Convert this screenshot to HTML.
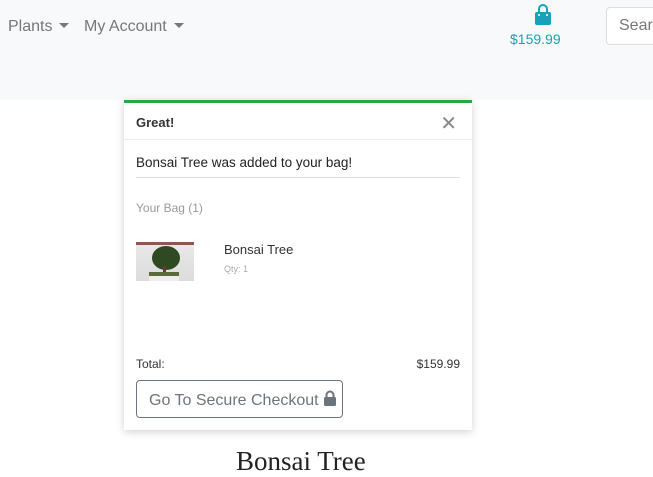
<!DOCTYPE html>
<html><head><meta charset="utf-8"><style>
*{box-sizing:border-box;margin:0;padding:0}
body{width:653px;height:464px;overflow:hidden;background:#fff;font-family:"Liberation Sans",sans-serif;position:relative}
.nav{position:absolute;left:0;top:0;width:653px;height:100px;background:#f8f9fa}
.nl{position:absolute;top:18px;font-size:16px;color:#777}
.caret{display:inline-block;width:0;height:0;border-left:5px solid transparent;border-right:5px solid transparent;border-top:5px solid #777;vertical-align:3px;margin-left:7px}
.price{position:absolute;left:510px;top:31px;font-size:14px;color:#17a2b8}
.search{position:absolute;left:606px;top:7px;width:60px;height:38px;border:1px solid #ddd;border-radius:4px;background:#fff;font-size:16px;color:#777;padding:9px 0 0 12px}
.pop{position:absolute;left:124px;top:100px;width:348px;height:330px;background:#fff;border-top:3px solid #28a745;box-shadow:0 2px 8px rgba(0,0,0,.18)}
.hd{height:37px;border-bottom:1px solid #eee;padding:12px 12px;font-size:13px;font-weight:bold;color:#333}
.x{position:absolute;right:15px;top:8px;font-size:20px;color:#888;font-weight:normal}
.t{position:absolute;font-size:13px;color:#222}
.hr{position:absolute;left:12px;top:74px;width:324px;height:1px;background:#e2e2e2}
.btn{position:absolute;left:12px;top:277px;width:207px;height:38px;border:1px solid #6c757d;border-radius:4px;font-size:16px;color:#6c757d;padding:9px 0 0 12px;white-space:nowrap}
</style></head><body>
<div class="nav">
<div class="nl" style="left:8px">Plants<span class="caret"></span></div>
<div class="nl" style="left:84px">My Account<span class="caret"></span></div>
<svg style="position:absolute;left:534px;top:4px" width="18" height="22" viewBox="0 0 18 22"><path d="M5 8V5a4 4 0 0 1 8 0v3" fill="none" stroke="#17a2b8" stroke-width="2"/><rect x="1" y="8" width="16" height="13" rx="2" fill="#17a2b8"/><circle cx="5" cy="11" r="1" fill="#fff"/><circle cx="13" cy="11" r="1" fill="#fff"/></svg>
<div class="price">$159.99</div>
<div class="search">Search</div>
</div>
<div class="pop">
<div class="hd">Great!<span class="x">✕</span></div>
<div class="t" style="left:12px;top:52px;font-size:13.5px">Bonsai Tree was added to your bag!</div>
<div class="hr"></div>
<div class="t" style="left:12px;top:98px;color:#999;font-size:12px">Your Bag (1)</div>
<div style="position:absolute;left:12px;top:139px;width:58px;height:39px;background:linear-gradient(#8a5a50 0,#8a5a50 3px,#e8e8e8 3px,#dcdcdc 100%);overflow:hidden">
<div style="position:absolute;left:16px;top:4px;width:28px;height:24px;background:#2f4a22;border-radius:50%"></div>
<div style="position:absolute;left:27px;top:24px;width:3px;height:8px;background:#5a4030"></div>
<div style="position:absolute;left:13px;top:30px;width:30px;height:9px;background:#eee;border-top:4px solid #5a6a3a"></div>
</div>
<div class="t" style="left:100px;top:139px;font-size:13px;color:#333">Bonsai Tree</div>
<div class="t" style="left:100px;top:161px;font-size:9px;color:#aaa">Qty: 1</div>
<div class="t" style="left:12px;top:254px;font-size:12px;color:#333">Total:</div>
<div class="t" style="right:12px;top:254px;font-size:12px;color:#333">$159.99</div>
<div class="btn">Go To Secure Checkout <svg width="14" height="16" viewBox="0 0 14 16" style="vertical-align:-1px"><path d="M3.5 7V5a3.5 3.5 0 0 1 7 0v2" fill="none" stroke="#6c757d" stroke-width="2"/><rect x="1" y="7" width="12" height="9" rx="1.5" fill="#6c757d"/></svg></div>
</div>
<div style="position:absolute;left:236px;top:446px;font-family:'Liberation Serif',serif;font-size:27px;color:#222">Bonsai Tree</div>
</body></html>
